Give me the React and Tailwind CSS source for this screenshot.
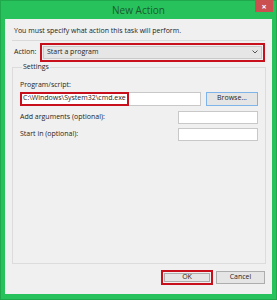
export default function App() {
  const font = { fontFamily: '"Open Sans", "Liberation Sans", sans-serif' };
  return (
    <div
      className="w-[277px] h-[300px] bg-[#27c25c] flex flex-col border border-[#1fa84c] text-[7px] text-[#1e1e1e]"
      style={font}
    >
      <div className="relative h-[18px] flex items-center justify-center">
        <span className="text-[10px] text-[#1a5a30]">New Action</span>
        <div className="absolute right-[3px] top-[-1px] w-[18px] h-[12px] bg-[#c9504f] flex items-center justify-center">
          <span className="text-white text-[9px] font-bold leading-none">×</span>
        </div>
      </div>
      <div className="flex-1 mx-[4px] mb-[5px] bg-[#f0f0f0] flex flex-col px-[7px]">
        <p className="mt-[7px] ml-[2px] leading-[10px]">
          You must specify what action this task will perform.
        </p>
        <div className="mt-[4px] h-px bg-[#d9d9d9]" />
        <div className="flex items-center h-[20px] mt-[1px]">
          <span className="ml-[2px] w-[26px]">Action:</span>
          <div className="flex-1 h-[19px] border-2 border-[#c8101c] p-[1px]">
            <div className="h-full bg-[#e6e6e6] border border-[#c9c9c9] flex items-center justify-between px-[3px]">
              <span>Start a program</span>
              <svg width="6" height="4" viewBox="0 0 6 4">
                <path d="M0.5 0.5 L3 3 L5.5 0.5" fill="none" stroke="#555" strokeWidth="1" />
              </svg>
            </div>
          </div>
        </div>
        <fieldset className="mt-0 flex-1 border border-[#dcdcdc] px-[7px] pb-[4px]">
          <legend className="ml-[2px] px-[1px] text-[#1e1e1e]">Settings</legend>
          <div className="mt-[7px] leading-[10px]">Program/script:</div>
          <div className="mt-[2px] flex items-center gap-[5px]">
            <div className="w-[181px] h-[14px] bg-white border border-[#c8c8c8] flex">
              <div className="w-[109px] h-[14px] -mt-[1px] -ml-[1px] border-2 border-[#c8101c] flex items-center px-[1px]">
                C:\Windows\System32\cmd.exe
              </div>
            </div>
            <div className="w-[52px] h-[14px] bg-[#e5e5e5] border border-[#7eb4ea] flex items-center justify-center">
              Browse...
            </div>
          </div>
          <div className="mt-[5px] flex items-center justify-between">
            <span>Add arguments (optional):</span>
            <div className="w-[80px] h-[13px] bg-white border border-[#c8c8c8]" />
          </div>
          <div className="mt-[4px] flex items-center justify-between">
            <span>Start in (optional):</span>
            <div className="w-[80px] h-[13px] bg-white border border-[#c8c8c8]" />
          </div>
        </fieldset>
        <div className="flex justify-end gap-[3px] mt-[6px] mb-[9px]">
          <div className="w-[52px] h-[15px] border-2 border-[#c8101c] p-px">
            <div className="h-full bg-[#e5e5e5] border border-[#adadad] flex items-center justify-center">
              OK
            </div>
          </div>
          <div className="w-[49px] h-[13px] mt-px bg-[#e5e5e5] border border-[#adadad] flex items-center justify-center">
            Cancel
          </div>
        </div>
      </div>
    </div>
  );
}
